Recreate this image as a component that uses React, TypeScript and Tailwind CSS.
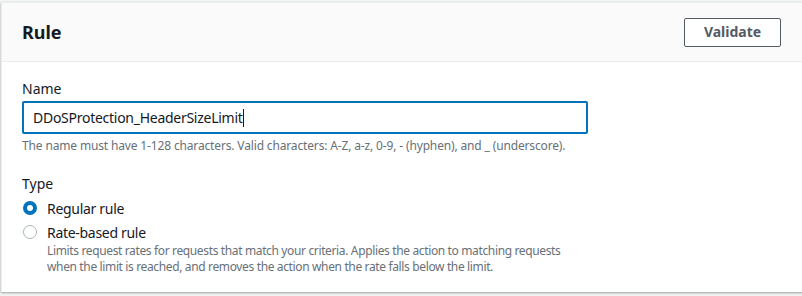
import React from "react";

const font = { fontFamily: '"Noto Sans", "Open Sans", Arial, sans-serif' };

const App = () => {
  return (
    <div className="w-[802px] h-[296px] bg-[#f2f3f3] pt-[2px] pl-[1px] overflow-hidden" style={font}>
      <div className="bg-white border-l border-t border-[#eaeded] shadow-[0_1px_2px_rgba(0,0,0,0.35)] h-[290px] w-[820px]">
        {/* Header */}
        <div className="h-[59px] bg-[#fafafa] border-b border-[#eaeded] flex items-center justify-between pl-[20px] pr-[40px]">
          <h2 className="text-[18px] font-bold text-[#16191f] leading-none">Rule</h2>
          <button className="w-[97px] h-[29px] border border-[#545b64] rounded-[2px] bg-white text-[14px] font-bold text-[#545b64] leading-none">
            Validate
          </button>
        </div>

        {/* Body */}
        <div className="pl-[20px] pt-[17px]">
          <div className="text-[14px] text-[#16191f] leading-[20px]">Name</div>
          <div className="mt-[2px] w-[566px] h-[33px] border-2 border-[#0073bb] rounded-[2px] flex items-center pl-[9px]">
            <span className="text-[14px] text-[#16191f] tracking-[-0.27px]">DDoSProtection_HeaderSizeLimit</span>
            <span className="w-px h-[18px] bg-[#16191f]" />
          </div>
          <div className="mt-[4px] text-[12px] text-[#687078] leading-[16px] tracking-[-0.15px]">
            The name must have 1-128 characters. Valid characters: A-Z, a-z, 0-9, - (hyphen), and _ (underscore).
          </div>

          <div className="mt-[20px] text-[14px] text-[#16191f] leading-[20px]">Type</div>
          <div className="mt-[4px] flex items-center h-[20px]">
            <span className="w-[14px] h-[14px] rounded-full bg-[#0073bb] flex items-center justify-center ml-[1px]">
              <span className="w-[6px] h-[6px] rounded-full bg-white" />
            </span>
            <span className="ml-[10px] text-[14px] text-[#16191f] tracking-[-0.3px]">Regular rule</span>
          </div>
          <div className="mt-[4px] flex items-center h-[20px]">
            <span className="w-[14px] h-[14px] rounded-full border border-[#aab7b8] bg-white ml-[1px]" />
            <span className="ml-[10px] text-[14px] text-[#16191f] tracking-[-0.3px]">Rate-based rule</span>
          </div>
          <div className="mt-[1px] pl-[25px] text-[12px] text-[#687078] leading-[16px] tracking-[-0.36px]">
            <p>Limits request rates for requests that match your criteria. Applies the action to matching requests</p>
            <p>when the limit is reached, and removes the action when the rate falls below the limit.</p>
          </div>
        </div>
      </div>
    </div>
  );
};

export default App;
